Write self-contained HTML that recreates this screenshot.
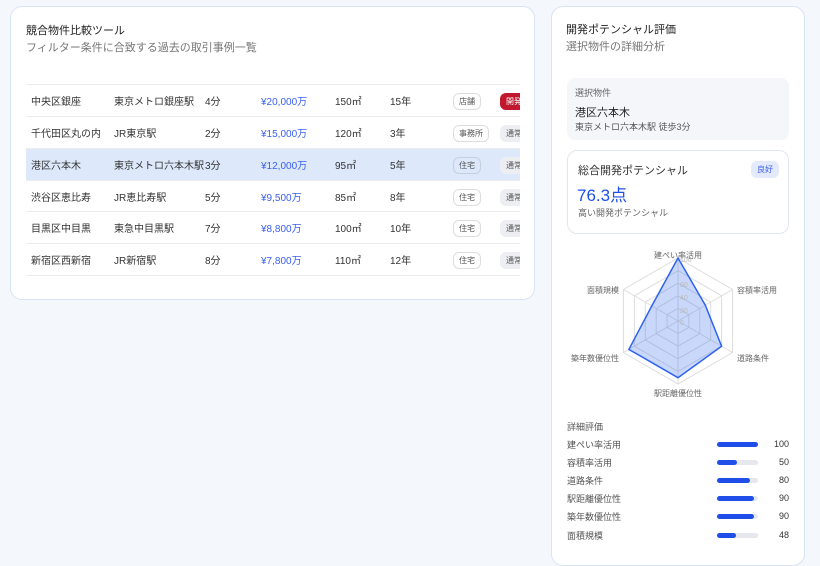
<!DOCTYPE html>
<html><head><meta charset="utf-8"><style>
*{box-sizing:border-box;margin:0;padding:0}
body{width:820px;height:553px;overflow:hidden;background:#f4f7fb;font-family:"Liberation Sans","Noto Sans CJK JP",sans-serif;color:#333;position:relative}
.card{position:absolute;background:#fff;border:1px solid #d8e4f5;border-radius:12px}
.t{position:absolute;white-space:nowrap}
.row{position:absolute;left:26px;width:494px;height:32px;border-top:1px solid #ececf0;font-size:10px;color:#333;white-space:nowrap}
.row span{position:absolute;top:8px}
.b{position:absolute;top:8px;font-size:8px;padding:2px 5px;border-radius:6px;border:1px solid #ddd;color:#555;background:#fff;white-space:nowrap;font-style:normal}
.g{position:absolute;top:8px;left:474px;font-size:8px;padding:3px 6px;border-radius:6px;background:#eceef2;color:#555;white-space:nowrap;font-style:normal}
.bar{position:absolute;left:717px;width:41px;height:5px;border-radius:3px;background:#e6e8ee}
.bar i{display:block;height:5px;border-radius:3px;background:#1f4fe8}
</style></head><body>
<div class="card" style="left:10px;top:6px;width:525px;height:294px;overflow:hidden">
<div class="t" style="left:15px;top:15px;font-size:11px;color:#222">競合物件比較ツール</div>
<div class="t" style="left:15px;top:32px;font-size:11px;color:#777">フィルター条件に合致する過去の取引事例一覧</div>
</div>
<div style="position:absolute;left:10px;top:6px;width:510px;height:294px;overflow:hidden">
<div class="row" style="left:16px;top:78px"><span style="left:5px">中央区銀座</span><span style="left:88px">東京メトロ銀座駅</span><span style="left:179px">4分</span><span style="left:235px;color:#3a5ef0">¥20,000万</span><span style="left:309px">150㎡</span><span style="left:364px">15年</span><i class="b" style="left:427px">店舗</i><i class="g" style="background:#c0182e;color:#fff">開発</i></div>
<div class="row" style="left:16px;top:110px"><span style="left:5px">千代田区丸の内</span><span style="left:88px">JR東京駅</span><span style="left:179px">2分</span><span style="left:235px;color:#3a5ef0">¥15,000万</span><span style="left:309px">120㎡</span><span style="left:364px">3年</span><i class="b" style="left:427px">事務所</i><i class="g">通常</i></div>
<div class="row" style="left:16px;top:142px;background:#dde9fb"><span style="left:5px">港区六本木</span><span style="left:88px">東京メトロ六本木駅</span><span style="left:179px">3分</span><span style="left:235px;color:#3a5ef0">¥12,000万</span><span style="left:309px">95㎡</span><span style="left:364px">5年</span><i class="b" style="left:427px;background:#dde9fb;border-color:#c6cfdc">住宅</i><i class="g">通常</i></div>
<div class="row" style="left:16px;top:174px"><span style="left:5px">渋谷区恵比寿</span><span style="left:88px">JR恵比寿駅</span><span style="left:179px">5分</span><span style="left:235px;color:#3a5ef0">¥9,500万</span><span style="left:309px">85㎡</span><span style="left:364px">8年</span><i class="b" style="left:427px">住宅</i><i class="g">通常</i></div>
<div class="row" style="left:16px;top:205px"><span style="left:5px">目黒区中目黒</span><span style="left:88px">東急中目黒駅</span><span style="left:179px">7分</span><span style="left:235px;color:#3a5ef0">¥8,800万</span><span style="left:309px">100㎡</span><span style="left:364px">10年</span><i class="b" style="left:427px">住宅</i><i class="g">通常</i></div>
<div class="row" style="left:16px;top:237px"><span style="left:5px">新宿区西新宿</span><span style="left:88px">JR新宿駅</span><span style="left:179px">8分</span><span style="left:235px;color:#3a5ef0">¥7,800万</span><span style="left:309px">110㎡</span><span style="left:364px">12年</span><i class="b" style="left:427px">住宅</i><i class="g">通常</i></div>
<div class="row" style="left:16px;top:269px"></div>
</div>

<div class="card" style="left:551px;top:6px;width:254px;height:560px"></div>
<div class="t" style="left:566px;top:21px;font-size:11px;color:#222">開発ポテンシャル評価</div>
<div class="t" style="left:566px;top:38px;font-size:11px;color:#777">選択物件の詳細分析</div>
<div style="position:absolute;left:567px;top:78px;width:222px;height:62px;background:#f4f6fa;border-radius:8px"></div>
<div class="t" style="left:575px;top:86px;font-size:9px;color:#666">選択物件</div>
<div class="t" style="left:575px;top:104px;font-size:11px;color:#222">港区六本木</div>
<div class="t" style="left:575px;top:120px;font-size:9px;color:#555">東京メトロ六本木駅 徒歩3分</div>
<div style="position:absolute;left:567px;top:150px;width:222px;height:84px;border:1px solid #e2e6ee;border-radius:10px"></div>
<div class="t" style="left:578px;top:162px;font-size:11px;color:#333">総合開発ポテンシャル</div>
<div class="t" style="left:751px;top:161px;font-size:8px;color:#3a5ef0;background:#e2eafc;padding:3px 6px;border-radius:6px">良好</div>
<div class="t" style="left:577px;top:181px;font-size:17px;color:#1f4fe8">76.3点</div>
<div class="t" style="left:578px;top:206px;font-size:9px;color:#666">高い開発ポテンシャル</div>

<svg style="position:absolute;left:0;top:0" width="820" height="553">
<g fill="none" stroke="#ddd" stroke-width="1">
<polygon points="678,258 732.6,289.5 732.6,352.5 678,384 623.4,352.5 623.4,289.5"/>
<polygon points="678,270.6 721.6,295.8 721.6,346.2 678,371.4 634.4,346.2 634.4,295.8"/>
<polygon points="678,283.2 710.7,302.1 710.7,339.9 678,358.8 645.3,339.9 645.3,302.1"/>
<polygon points="678,295.8 699.8,308.4 699.8,333.6 678,346.2 656.2,333.6 656.2,308.4"/>
<polygon points="678,308.4 688.9,314.7 688.9,327.3 678,333.6 667.1,327.3 667.1,314.7"/>
<path d="M678,321L678,258M678,321L732.6,289.5M678,321L732.6,352.5M678,321L678,384M678,321L623.4,352.5M678,321L623.4,289.5"/>
</g>
<polygon points="678,258 705.3,305.2 721.6,346.2 678,377.7 628.9,349.4 651.8,305.9" fill="rgba(60,110,240,0.28)" stroke="#2f63f0" stroke-width="1.5"/>
<g font-size="7" fill="#bbb" font-family="Liberation Sans"><text x="680" y="262">100</text><text x="680" y="287">60</text><text x="680" y="300">40</text><text x="680" y="313">20</text><text x="680" y="325">0</text></g>
<g font-size="8" fill="#666" font-family="Liberation Sans,Noto Sans CJK JP,sans-serif">
<text x="678" y="258" text-anchor="middle">建ぺい率活用</text>
<text x="737" y="293">容積率活用</text>
<text x="737" y="361">道路条件</text>
<text x="678" y="396" text-anchor="middle">駅距離優位性</text>
<text x="619" y="361" text-anchor="end">築年数優位性</text>
<text x="619" y="293" text-anchor="end">面積規模</text>
</g></svg>

<div class="t" style="left:567px;top:420px;font-size:9px;color:#555">詳細評価</div>
<div class="t" style="left:567px;top:438px;font-size:9px;color:#555">建ぺい率活用</div><div class="bar" style="top:442px"><i style="width:41px"></i></div><div class="t" style="left:760px;width:29px;text-align:right;top:439px;font-size:9px">100</div>
<div class="t" style="left:567px;top:456px;font-size:9px;color:#555">容積率活用</div><div class="bar" style="top:460px"><i style="width:20px"></i></div><div class="t" style="left:760px;width:29px;text-align:right;top:457px;font-size:9px">50</div>
<div class="t" style="left:567px;top:474px;font-size:9px;color:#555">道路条件</div><div class="bar" style="top:478px"><i style="width:33px"></i></div><div class="t" style="left:760px;width:29px;text-align:right;top:475px;font-size:9px">80</div>
<div class="t" style="left:567px;top:492px;font-size:9px;color:#555">駅距離優位性</div><div class="bar" style="top:496px"><i style="width:37px"></i></div><div class="t" style="left:760px;width:29px;text-align:right;top:493px;font-size:9px">90</div>
<div class="t" style="left:567px;top:510px;font-size:9px;color:#555">築年数優位性</div><div class="bar" style="top:514px"><i style="width:37px"></i></div><div class="t" style="left:760px;width:29px;text-align:right;top:511px;font-size:9px">90</div>
<div class="t" style="left:567px;top:529px;font-size:9px;color:#555">面積規模</div><div class="bar" style="top:533px"><i style="width:19px"></i></div><div class="t" style="left:760px;width:29px;text-align:right;top:530px;font-size:9px">48</div>
</body></html>
